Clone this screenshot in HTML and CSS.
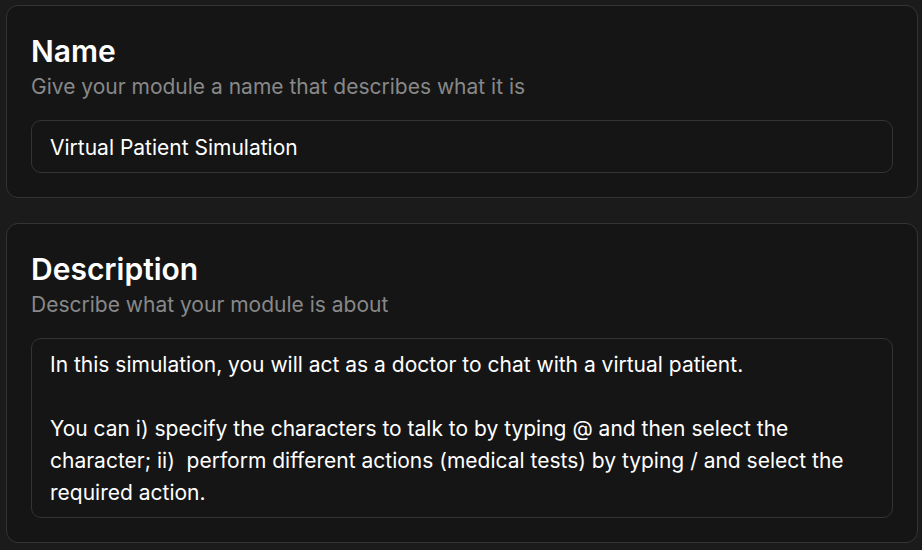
FILE: index.html
```html
<!DOCTYPE html>
<html lang="en">
<head>
<meta charset="utf-8">
<title>Module</title>
<link rel="stylesheet" href="styles.css">
</head>
<body>
<main class="page">
  <section class="card">
    <h2 class="card-title">Name</h2>
    <p class="card-sub">Give your module a name that describes what it is</p>
    <div class="field field-input">Virtual Patient Simulation</div>
  </section>
  <section class="card">
    <h2 class="card-title">Description</h2>
    <p class="card-sub">Describe what your module is about</p>
    <div class="field field-area">In this simulation, you will act as a doctor to chat with a virtual patient.<br><br>You can i) specify the characters to talk to by typing @ and then select the character; ii)&nbsp; perform different actions (medical tests) by typing / and select the required action.</div>
  </section>
</main>
</body>
</html>
```

FILE: styles.css
```css
* { box-sizing: border-box; }
html, body {
  margin: 0;
  padding: 0;
  background: #1b1b1b;
}
body {
  font-family: Inter, "Noto Sans", sans-serif;
  color: #ffffff;
  width: 922px;
  height: 550px;
  overflow: hidden;
}
.page {
  display: flex;
  flex-direction: column;
  gap: 25px;
  padding: 5px 0 0 6px;
}
.card {
  width: 912px;
  background: #151515;
  border: 1px solid #343434;
  border-radius: 12px;
  padding: 24px;
  display: flex;
  flex-direction: column;
}
.card-title {
  margin: 0;
  font-size: 30px;
  font-weight: 600;
  line-height: 42px;
  color: #ffffff;
}
.card-sub {
  margin: 0;
  font-size: 21px;
  line-height: 30px;
  color: #888888;
}
.field {
  margin-top: 18px;
  border: 1px solid #343434;
  border-radius: 10px;
  background: #151515;
  font-size: 21px;
  color: #ffffff;
  padding: 0 18px;
}
.field-input {
  height: 53px;
  padding-top: 2px;
  display: flex;
  align-items: center;
}
.field-area {
  height: 180px;
  padding-top: 10px;
  padding-bottom: 8px;
  line-height: 32px;
}
```
